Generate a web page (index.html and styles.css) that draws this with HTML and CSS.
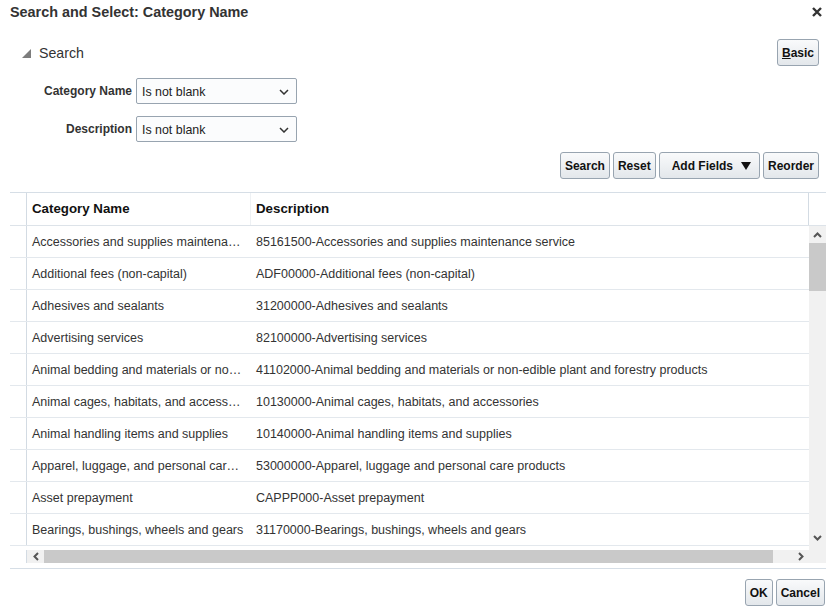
FILE: index.html
```html
<!DOCTYPE html>
<html>
<head>
<meta charset="utf-8">
<title>Search and Select: Category Name</title>
<link rel="stylesheet" href="styles.css">
</head>
<body>
<div class="dialog">
  <div class="titlebar">
    <span class="title">Search and Select: Category Name</span>
    <svg class="close" width="10" height="10" viewBox="0 0 10 10"><path d="M1 1L9 9M9 1L1 9" stroke="#333" stroke-width="2.4" fill="none"/></svg>
  </div>

  <div class="search-row">
    <div class="disclose">
      <svg width="9" height="9" viewBox="0 0 9 9"><polygon points="9,0 9,9 0,9" fill="#7d7d7d"/></svg>
      <span>Search</span>
    </div>
    <button class="btn"><u>B</u>asic</button>
  </div>

  <div class="form">
    <label class="lbl">Category Name</label>
    <div class="select"><span>Is not blank</span><svg width="10" height="6" viewBox="0 0 10 6"><path d="M1 1L5 5L9 1" stroke="#333" stroke-width="1.5" fill="none"/></svg></div>
    <label class="lbl">Description</label>
    <div class="select"><span>Is not blank</span><svg width="10" height="6" viewBox="0 0 10 6"><path d="M1 1L5 5L9 1" stroke="#333" stroke-width="1.5" fill="none"/></svg></div>
  </div>

  <div class="actions">
    <button class="btn">Search</button>
    <button class="btn">Reset</button>
    <button class="btn btn-menu">Add Fields <svg width="10" height="8" viewBox="0 0 10 8"><polygon points="0,0 10,0 5,8" fill="#111"/></svg></button>
    <button class="btn">Reorder</button>
  </div>

  <div class="table">
    <div class="thead">
      <div class="rh"></div>
      <div class="c1 hd">Category Name</div>
      <div class="c2 hd">Description</div>
      <div class="sc"></div>
    </div>
    <div class="tbody">
      <div class="rows">
        <div class="row"><div class="rh"></div><div class="c1">Accessories and supplies maintenance service</div><div class="c2">85161500-Accessories and supplies maintenance service</div></div>
        <div class="row"><div class="rh"></div><div class="c1">Additional fees (non-capital)</div><div class="c2">ADF00000-Additional fees (non-capital)</div></div>
        <div class="row"><div class="rh"></div><div class="c1">Adhesives and sealants</div><div class="c2">31200000-Adhesives and sealants</div></div>
        <div class="row"><div class="rh"></div><div class="c1">Advertising services</div><div class="c2">82100000-Advertising services</div></div>
        <div class="row"><div class="rh"></div><div class="c1">Animal bedding and materials or non-edible plant and forestry products</div><div class="c2">41102000-Animal bedding and materials or non-edible plant and forestry products</div></div>
        <div class="row"><div class="rh"></div><div class="c1">Animal cages, habitats, and accessories</div><div class="c2">10130000-Animal cages, habitats, and accessories</div></div>
        <div class="row"><div class="rh"></div><div class="c1">Animal handling items and supplies</div><div class="c2">10140000-Animal handling items and supplies</div></div>
        <div class="row"><div class="rh"></div><div class="c1">Apparel, luggage, and personal care products</div><div class="c2">53000000-Apparel, luggage and personal care products</div></div>
        <div class="row"><div class="rh"></div><div class="c1">Asset prepayment</div><div class="c2">CAPPP000-Asset prepayment</div></div>
        <div class="row"><div class="rh"></div><div class="c1">Bearings, bushings, wheels and gears</div><div class="c2">31170000-Bearings, bushings, wheels and gears</div></div>
      </div>
      <div class="vscroll">
        <div class="arrow"><svg width="9" height="6" viewBox="0 0 9 6"><path d="M1 5L4.5 1.5L8 5" stroke="#555" stroke-width="2" fill="none"/></svg></div>
        <div class="vthumb"></div>
        <div class="vtrack"></div>
        <div class="arrow"><svg width="9" height="6" viewBox="0 0 9 6"><path d="M1 1L4.5 4.5L8 1" stroke="#555" stroke-width="2" fill="none"/></svg></div>
      </div>
      <div class="hscroll">
        <div class="hgap"></div>
        <div class="harrow"><svg width="6" height="9" viewBox="0 0 6 9"><path d="M5 1L1.5 4.5L5 8" stroke="#555" stroke-width="2" fill="none"/></svg></div>
        <div class="hthumb"></div>
        <div class="htrack"></div>
        <div class="harrow"><svg width="6" height="9" viewBox="0 0 6 9"><path d="M1 1L4.5 4.5L1 8" stroke="#555" stroke-width="2" fill="none"/></svg></div>
      </div>
      <div class="corner"></div>
    </div>
  </div>

  <div class="footer">
    <button class="btn">OK</button>
    <button class="btn">Cancel</button>
  </div>
</div>
</body>
</html>
```

FILE: styles.css
```css
html, body {
  margin: 0;
  padding: 0;
  background: #fff;
}
body {
  font-family: "Liberation Sans", Arial, sans-serif;
  color: #333;
}
.dialog {
  width: 836px;
  height: 614px;
  overflow: hidden;
}
.titlebar {
  height: 23px;
  display: flex;
  align-items: center;
  justify-content: space-between;
  padding: 0 14px 0 10px;
}
.title {
  font-weight: bold;
  font-size: 14.4px;
  color: #333;
}
.close {
  display: block;
}
.search-row {
  display: flex;
  align-items: center;
  justify-content: space-between;
  height: 27px;
  margin-top: 16px;
  padding: 0 17px 0 22px;
}
.disclose {
  display: flex;
  align-items: center;
  gap: 8px;
  font-size: 14.2px;
  color: #333;
}
.disclose svg {
  display: block;
  margin-top: 1px;
}
.btn {
  height: 27px;
  box-sizing: border-box;
  border: 1px solid #98a4b0;
  border-radius: 3px;
  background: linear-gradient(#f9fafb, #e3e7eb);
  font-family: "Liberation Sans", Arial, sans-serif;
  font-weight: bold;
  font-size: 12px;
  color: #111;
  padding: 0 4px;
  display: inline-flex;
  align-items: center;
  justify-content: center;
  margin: 0;
}
.btn u {
  text-decoration: underline;
}
.btn-menu {
  padding: 0 8px 0 12px;
  gap: 8px;
}
.btn-menu svg {
  display: block;
}
.form {
  display: grid;
  grid-template-columns: 132px 161px;
  column-gap: 4px;
  row-gap: 12px;
  align-items: center;
  margin-top: 12px;
}
.lbl {
  text-align: right;
  font-weight: bold;
  font-size: 12px;
  color: #333;
}
.select {
  height: 26px;
  box-sizing: border-box;
  border: 1px solid #98a4b0;
  border-radius: 2px;
  background: #fbfcfd;
  display: flex;
  align-items: center;
  justify-content: space-between;
  padding: 1px 7px 0 5px;
  font-size: 12.4px;
  color: #222;
}
.select svg {
  display: block;
}
.actions {
  display: flex;
  justify-content: flex-end;
  gap: 3px;
  margin-top: 10px;
  padding-right: 17px;
}
.table {
  margin: 13px 10px 0;
  border-top: 1px solid #d6dee6;
  border-bottom: 1px solid #d6dee6;
  padding-bottom: 5px;
}
.thead {
  display: flex;
  height: 33px;
  box-sizing: border-box;
  border-bottom: 1px solid #dde3e9;
}
.rh {
  width: 16px;
  flex: none;
  border-right: 1px solid #d3dbe3;
}
.c1 {
  width: 224px;
  flex: none;
  box-sizing: border-box;
  padding: 1px 5px 0;
  white-space: nowrap;
  overflow: hidden;
  text-overflow: ellipsis;
  display: block;
  line-height: 30px;
}
.c2 {
  flex: 1;
  min-width: 0;
  padding: 1px 5px 0;
  white-space: nowrap;
  overflow: hidden;
  line-height: 30px;
}
.hd {
  font-weight: bold;
  font-size: 13.3px;
  color: #111;
}
.thead .c1 {
  border-right: 1px solid #eef1f4;
}
.thead .c2 {
  border-right: 1px solid #d3dbe3;
}
.sc {
  width: 17px;
  flex: none;
}
.tbody {
  display: grid;
  grid-template-columns: 1fr 17px;
  grid-template-rows: 320px 17px;
}
.rows {
  overflow: hidden;
}
.row {
  display: flex;
  height: 32px;
  box-sizing: border-box;
  border-bottom: 1px solid #e3e8ed;
  font-size: 12.5px;
  color: #333;
}
.vscroll {
  background: #f1f1f1;
  display: flex;
  flex-direction: column;
}
.arrow {
  height: 17px;
  flex: none;
  display: flex;
  align-items: center;
  justify-content: center;
}
.vthumb {
  height: 48px;
  flex: none;
  background: #c9c9c9;
}
.vtrack {
  flex: 1;
}
.hscroll {
  display: flex;
  padding-top: 4px;
  box-sizing: border-box;
}
.hgap {
  width: 16px;
  flex: none;
  border-right: 1px solid #d3dbe3;
}
.harrow {
  width: 17px;
  flex: none;
  background: #f1f1f1;
  display: flex;
  align-items: center;
  justify-content: center;
}
.hthumb {
  width: 729px;
  flex: none;
  background: #c9c9c9;
}
.htrack {
  flex: 1;
  background: #f1f1f1;
}
.corner {
  background: #f1f1f1;
}
.footer {
  display: flex;
  justify-content: flex-end;
  gap: 3px;
  margin-top: 10px;
  padding-right: 11px;
}
```
